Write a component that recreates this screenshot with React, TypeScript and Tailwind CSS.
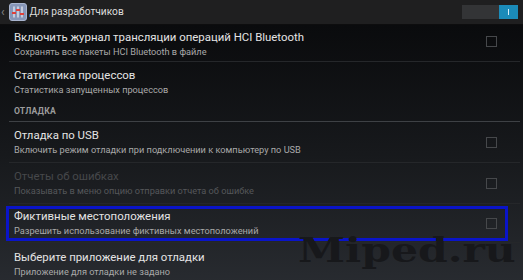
import React from "react"

interface Pref {
  title: string
  summary: string
  checkbox?: boolean
  disabled?: boolean
}

const font = { fontFamily: "Roboto, 'Noto Sans', sans-serif" }

function Checkbox({ className = "" }: { className?: string }) {
  return <div className={`w-[11px] h-[11px] border border-[#46484b] shrink-0 ${className}`} />
}

function Divider({ strong = false }: { strong?: boolean }) {
  return <div className={`h-px ml-[9px] mr-[3px] ${strong ? "bg-[#3e4145]" : "bg-[#25272a]"}`} />
}

function Row({ pref, className, boxClassName = "" }: { pref: Pref; className: string; boxClassName?: string }) {
  return (
    <div className={`flex items-center pl-[14px] pr-[26px] ${className}`}>
      <div className="flex-1 min-w-0">
        <div className={`text-[11.4px] leading-[16px] whitespace-nowrap ${pref.disabled ? "text-[#46484b]" : "text-[#e4e4e4]"}`}>
          {pref.title}
        </div>
        <div className={`text-[9.2px] leading-[14px] whitespace-nowrap ${pref.disabled ? "text-[#55575a]" : "text-[#a9a9a9]"}`}>
          {pref.summary}
        </div>
      </div>
      {pref.checkbox && <Checkbox className={boxClassName} />}
    </div>
  )
}

function SettingsIcon() {
  return (
    <svg width="18" height="18" viewBox="0 0 18 18">
      <rect x="0.5" y="0.5" width="17" height="17" rx="2.5" fill="#8796b8" stroke="#a9b5cf" />
      <line x1="5" y1="3.5" x2="5" y2="14.5" stroke="#eef0f6" strokeWidth="1.2" />
      <line x1="9" y1="3.5" x2="9" y2="14.5" stroke="#eef0f6" strokeWidth="1.2" />
      <line x1="13" y1="3.5" x2="13" y2="14.5" stroke="#eef0f6" strokeWidth="1.2" />
      <rect x="3" y="9" width="4" height="2" fill="#e0403a" />
      <rect x="7" y="6" width="4" height="2" fill="#e0403a" />
      <rect x="11" y="10" width="4" height="2" fill="#e0403a" />
    </svg>
  )
}

export default function App() {
  return (
    <div className="w-[523px] h-[280px] overflow-hidden bg-[#111214] flex flex-col" style={font}>
      {/* Action bar */}
      <div className="h-[25px] shrink-0 flex items-center bg-[#1f1f20] border-b border-[#0d0d0e]">
        <span className="ml-[1px] text-[#8a8a8a] text-[12px] leading-none">‹</span>
        <div className="ml-[4px]">
          <SettingsIcon />
        </div>
        <span className="ml-[3px] text-[10.2px] text-[#dcdcdc]">Для разработчиков</span>
        <div className="ml-auto mr-[5px] flex h-[14px]">
          <div className="w-[37px] bg-[#333436]" />
          <div className="w-[19px] bg-[#1b8bb9] flex items-center justify-center">
            <div className="w-px h-[6px] bg-[#d8eef7]" />
          </div>
        </div>
      </div>

      {/* Preference list */}
      <div className="relative flex-1 bg-gradient-to-b from-[#0a0b0d] via-[#17191c] to-[#282b30]">
        <Row
          className="h-[36px] pt-px"
          boxClassName="mb-[4px]"
          pref={{
            title: "Включить журнал трансляции операций HCI Bluetooth",
            summary: "Сохранять все пакеты HCI Bluetooth в файле",
            checkbox: true,
          }}
        />
        <Divider />
        <Row
          className="h-[40px]"
          pref={{ title: "Статистика процессов", summary: "Статистика запущенных процессов" }}
        />
        <div className="h-[19px] pl-[14px] flex items-center text-[8.6px] font-bold tracking-[0.2px] text-[#9c9c9c]">
          ОТЛАДКА
        </div>
        <Divider strong />
        <Row
          className="h-[40px]"
          pref={{
            title: "Отладка по USB",
            summary: "Включить режим отладки при подключении к компьютеру по USB",
            checkbox: true,
          }}
        />
        <Divider />
        <Row
          className="h-[40px]"
          pref={{
            title: "Отчеты об ошибках",
            summary: "Показывать в меню опцию отправки отчета об ошибке",
            checkbox: true,
            disabled: true,
          }}
        />
        <Divider />
        <div className="relative">
          <Row
            className="h-[38px]"
            pref={{
              title: "Фиктивные местоположения",
              summary: "Разрешить использование фиктивных местоположений",
              checkbox: true,
            }}
          />
          {/* annotation frame */}
          <div className="absolute left-[6px] top-[2px] w-[502px] h-[35px] border-[3px] border-[#0a14c8]" />
        </div>
        <Divider />
        <Row
          className="h-[40px] items-start pt-[6px]"
          pref={{ title: "Выберите приложение для отладки", summary: "Приложение для отладки не задано" }}
        />

        {/* watermark */}
        <div
          className="absolute left-[298px] top-[208px] text-[34px] leading-none font-black text-[#17181b] scale-x-125 origin-left pointer-events-none whitespace-nowrap"
          style={{ fontFamily: "'DejaVu Serif', serif" }}
        >
          Miped.ru
        </div>
      </div>
    </div>
  )
}
